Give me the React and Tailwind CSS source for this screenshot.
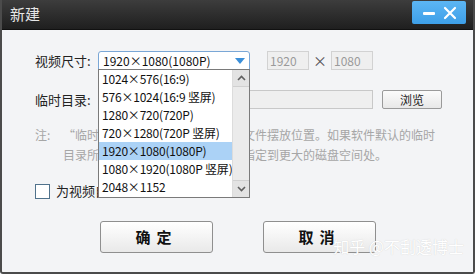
import React from 'react'

const sizes = [
  '1024×576(16:9)',
  '576×1024(16:9 竖屏)',
  '1280×720(720P)',
  '720×1280(720P 竖屏)',
  '1920×1080(1080P)',
  '1080×1920(1080P 竖屏)',
  '2048×1152',
]

const font = { fontFamily: '"Noto Sans CJK SC", "Noto Sans", sans-serif' }

export default function App() {
  const selected = '1920×1080(1080P)'

  return (
    <div
      className="w-[476px] h-[275px] bg-white overflow-hidden"
      style={font}
    >
      <div className="w-[475px] h-[274px] flex flex-col border-2 border-t-0 border-[#4b4b4b] rounded-b-[3px] bg-[#f3f4f6]">
        {/* Title bar */}
        <div className="h-[30px] shrink-0 flex items-start justify-between bg-gradient-to-b from-[#3d3d3d] to-[#1f1f1f] border-b border-[#111]">
          <span className="ml-[8px] mt-[4px] text-[15px] leading-[20px] text-[#e6e6e6]">新建</span>
          <div className="mr-[7px] mt-[1px] w-[54px] h-[23px] rounded-[2px] bg-gradient-to-b from-[#5cb6f4] to-[#3d9fe8] flex items-center justify-around px-[6px]">
            <svg width="14" height="14" viewBox="0 0 14 14">
              <rect x="1" y="6" width="12" height="3" rx="1" fill="#fff" />
            </svg>
            <svg width="14" height="14" viewBox="0 0 14 14">
              <path d="M2 2 L12 12 M12 2 L2 12" stroke="#fff" strokeWidth="2.2" strokeLinecap="round" />
            </svg>
          </div>
        </div>

        {/* Body */}
        <div className="relative flex-1 pl-[33px] pt-[21px]">
          {/* Row 1 */}
          <div className="flex items-center h-[19px]">
            <span className="w-[63px] text-[13px] text-[#222]">视频尺寸:</span>
            <div className="relative">
              <div className="w-[152px] h-[19px] border border-[#7aa7d6] rounded-t-[3px] bg-white flex items-center justify-between pl-[4px] pr-[4px]">
                <span className="text-[12px] text-[#111] leading-none">{selected}</span>
                <svg width="10" height="6" viewBox="0 0 10 6">
                  <path d="M0 0 H10 L5 6 Z" fill="#3b8fd9" />
                </svg>
              </div>
              {/* Dropdown list */}
              <div className="absolute left-0 top-[18px] z-10 w-[152px] h-[129px] bg-white border border-[#7a7a7a] flex">
                <div className="flex-1 flex flex-col overflow-hidden">
                  {sizes.map((s) => (
                    <div
                      key={s}
                      className={`h-[18px] pl-[3px] flex items-center text-[12px] tracking-[-0.2px] text-[#111] whitespace-nowrap ${
                        s === selected ? 'bg-[#abd2f6]' : ''
                      }`}
                    >
                      {s}
                    </div>
                  ))}
                </div>
                <div className="w-[17px] bg-[#ebebeb] border-l border-[#dcdcdc] flex flex-col justify-between">
                  <div className="h-[17px] bg-[#e3e3e3] border-b border-[#d0d0d0] flex items-center justify-center">
                    <svg width="9" height="6" viewBox="0 0 9 6">
                      <path d="M1 5 L4.5 1.5 L8 5" stroke="#606060" strokeWidth="1.6" fill="none" />
                    </svg>
                  </div>
                  <div className="h-[17px] bg-[#e3e3e3] border-t border-[#d0d0d0] flex items-center justify-center">
                    <svg width="9" height="6" viewBox="0 0 9 6">
                      <path d="M1 1 L4.5 4.5 L8 1" stroke="#606060" strokeWidth="1.6" fill="none" />
                    </svg>
                  </div>
                </div>
              </div>
            </div>
            <div className="ml-[17px] w-[42px] h-[19px] border border-[#d2d2d2] bg-[#efefef] pl-[2px] flex items-center text-[12px] text-[#9a9a9a]">
              1920
            </div>
            <span className="w-[22px] text-center text-[14px] text-[#555]">×</span>
            <div className="w-[42px] h-[19px] border border-[#d2d2d2] bg-[#efefef] pl-[2px] flex items-center text-[12px] text-[#9a9a9a]">
              1080
            </div>
          </div>

          {/* Row 2 */}
          <div className="flex items-center h-[19px] mt-[20px]">
            <span className="w-[63px] text-[13px] text-[#222]">临时目录:</span>
            <div className="w-[275px] h-[19px] border border-[#c8c8c8] bg-[#efefef]" />
            <button className="ml-[9px] w-[60px] h-[19px] border border-[#9a9a9a] rounded-[2px] bg-gradient-to-b from-[#fbfbfb] to-[#e8e8e8] text-[12px] text-[#222] leading-none">
              浏览
            </button>
          </div>

          {/* Note */}
          <div className="mt-[16px] text-[12px] leading-[20px] text-[#a6a6a6] flex whitespace-nowrap">
            <span className="w-[28px] shrink-0">注:</span>
            <div className="flex flex-col">
              <span>“临时目录”用于设置工程和缓存文件摆放位置。如果软件默认的临时</span>
              <span>目录所在磁盘空间不足时，请将其指定到更大的磁盘空间处。</span>
            </div>
          </div>

          {/* Checkbox */}
          <div className="mt-[18px] flex items-center h-[16px]">
            <div className="w-[15px] h-[15px] border border-[#50728c] bg-white" />
            <span className="ml-[6px] text-[13px] text-[#222]">为视频自动设置临时目录</span>
          </div>

          {/* Buttons */}
          <div className="mt-[22px] flex pl-[65px] gap-[50px]">
            <button className="w-[113px] h-[32px] border border-[#8f8f8f] rounded-[3px] bg-gradient-to-b from-[#ffffff] to-[#e9e9e9] text-[15px] font-bold text-[#111] tracking-[6px]">
              确定
            </button>
            <button className="w-[113px] h-[32px] border border-[#8f8f8f] rounded-[3px] bg-gradient-to-b from-[#ffffff] to-[#e9e9e9] text-[15px] font-bold text-[#111] tracking-[6px]">
              取消
            </button>
          </div>

          {/* Watermark */}
          <span className="absolute right-[9px] bottom-[14px] text-[16px] text-white [text-shadow:0_0_1px_#c8c8c8]">
            知乎 @不刮透博士
          </span>
        </div>
      </div>
    </div>
  )
}
